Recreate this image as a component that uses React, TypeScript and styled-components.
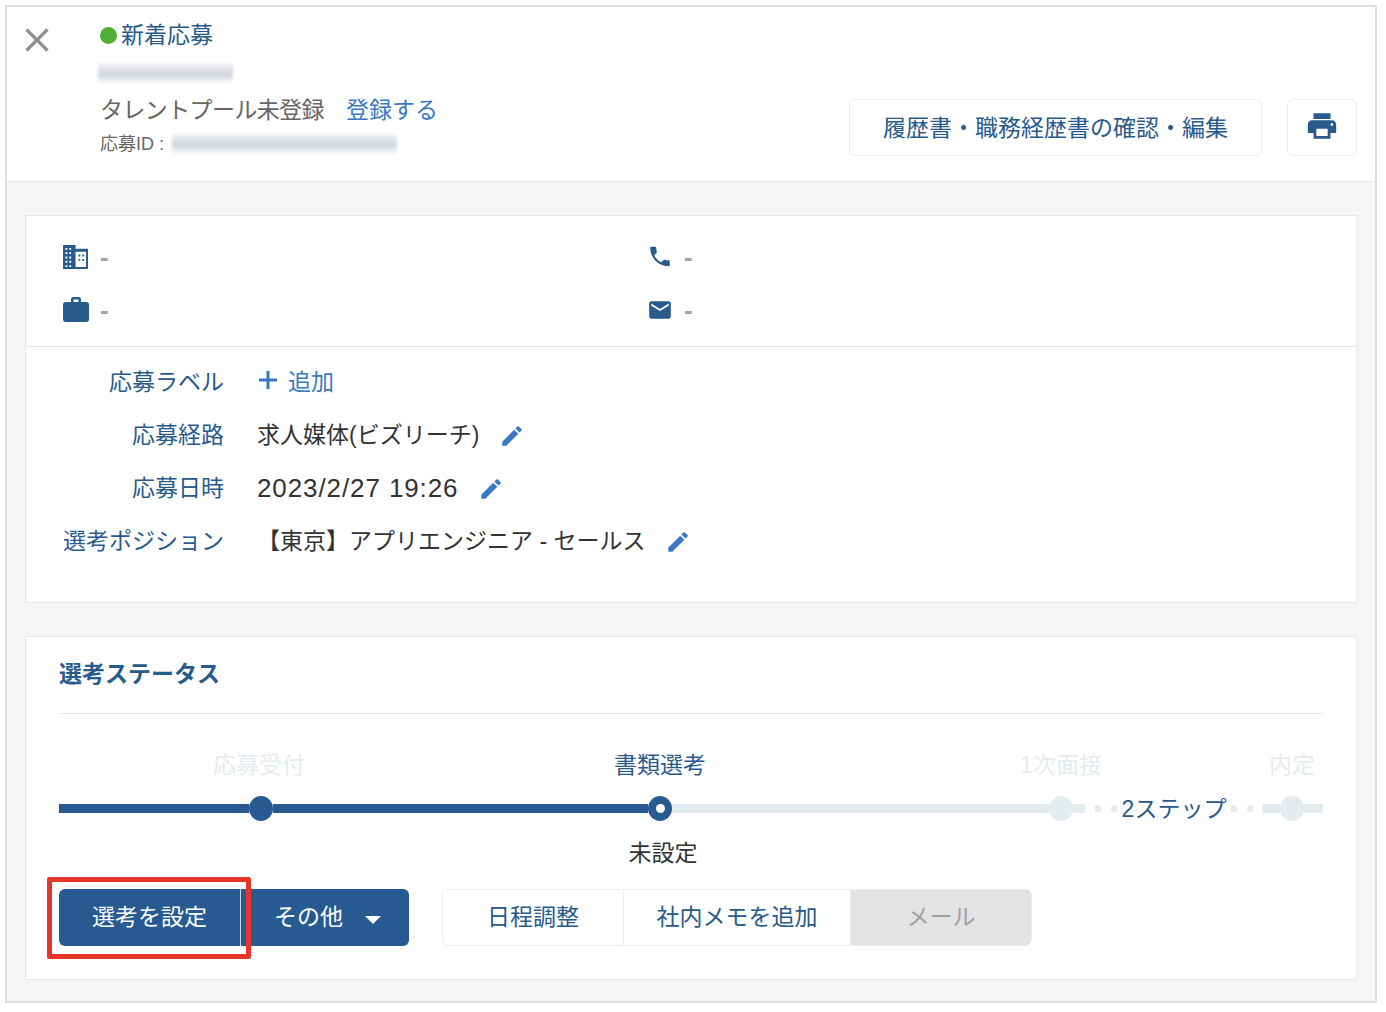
import React from 'react';
import styled, { createGlobalStyle } from 'styled-components';
import { MdClose, MdEdit, MdEmail, MdLocalPrintshop, MdPhone } from 'react-icons/md';

const NAVY = '#285a8c';
const BLUE = '#3a78c4';
const FADED = '#e5ecef';

const GlobalStyle = createGlobalStyle`
  html, body {
    margin: 0;
    padding: 0;
    background: #fff;
  }
  body {
    font-family: "Liberation Sans", "Noto Sans CJK JP", sans-serif;
    font-size: 23px;
    color: #333;
  }
  * { box-sizing: border-box; }
`;

const BuildingIcon = () => (
  <svg width="26" height="24" viewBox="0 0 27 25" fill={NAVY}>
    <path d="M0 0h13v4h13v21H0zM2.500 3v2h2V3zm4 0v2h2V3zM2.500 7.500v2h2v-2zm4 0v2h2v-2zM2.500 12v2h2v-2zm4 0v2h2v-2zM2.500 16.500v2h2v-2zm4 0v2h2v-2zM2.500 21v2h2v-2zm4 0v2h2v-2zM13 7v16h11V7zm3 3h2v2h-2zm4 0h2v2h-2zm-4 4.500h2v2h-2zm4 0h2v2h-2z" fillRule="evenodd" />
  </svg>
);

const CaseIcon = () => (
  <svg width="26" height="25" viewBox="0 0 26 25" fill={NAVY}>
    <path d="M8 5V2.500A2.500 2.500 0 0 1 10.500 0h5A2.500 2.500 0 0 1 18 2.500V5h5a3 3 0 0 1 3 3v14a3 3 0 0 1-3 3H3a3 3 0 0 1-3-3V8a3 3 0 0 1 3-3zm2.500 0h5V2.500h-5z" fillRule="evenodd" />
  </svg>
);

const Frame = styled.div`
  margin: 5px;
  width: 1372px;
  height: 998px;
  border: 2px solid #dedede;
  background: #f5f5f5;
  display: flex;
  flex-direction: column;
`;

const Header = styled.header`
  height: 175px;
  flex: none;
  background: #fff;
  border-bottom: 1px solid #e6e6e6;
  display: flex;
  align-items: flex-start;
  padding: 9px 18px 0 10px;
`;

const CloseButton = styled.div`
  width: 83px;
  padding-top: 4px;
  color: #8f8f8f;
  display: flex;
  flex: none;
`;

const Info = styled.div`
  display: flex;
  flex-direction: column;
`;

const StatusRow = styled.div`
  display: flex;
  align-items: center;
  gap: 4px;
  height: 34px;
  color: ${NAVY};
`;

const GreenDot = styled.span`
  width: 17px;
  height: 17px;
  margin-top: 4px;
  border-radius: 50%;
  background: #4fae33;
`;

const Blurred = styled.div<{ $w: number }>`
  width: ${p => p.$w}px;
  height: 19px;
  background: linear-gradient(#f3f4f5, #d9dce2 40%, #d3d7dd 60%, #f3f4f5);
  filter: blur(1.5px);
`;

const NameBlur = styled(Blurred)`
  margin: 13px 0 9px -2px;
`;

const IdBlur = styled(Blurred)`
  margin-top: 2px;
`;

const TalentRow = styled.div`
  display: flex;
  align-items: center;
  gap: 22px;
  height: 34px;
  color: #666;
`;

const TalentText = styled.span`
  letter-spacing: -0.6px;
`;

const TextLink = styled.a`
  color: ${BLUE};
`;

const IdRow = styled.div`
  display: flex;
  align-items: center;
  height: 24px;
  margin-top: 5px;
  font-size: 18px;
  color: #666;
  gap: 8px;
`;

const HeaderActions = styled.div`
  margin-left: auto;
  margin-top: 83px;
  display: flex;
  gap: 25px;
`;

const OutlineButton = styled.button<{ $w: number }>`
  width: ${p => p.$w}px;
  height: 57px;
  background: #fff;
  border: 1px solid #e9edf0;
  border-radius: 6px;
  color: ${NAVY};
  font: inherit;
  padding: 0 0 3px;
  display: flex;
  align-items: center;
  justify-content: center;
`;

const Body = styled.main`
  flex: 1;
  padding: 33px 18px 22px;
  display: flex;
  flex-direction: column;
  gap: 33px;
`;

const Card = styled.section<{ $h: number }>`
  height: ${p => p.$h}px;
  background: #fff;
  border: 1px solid #e8e8e8;
`;

const ContactGrid = styled.div`
  display: grid;
  grid-template-columns: 584px 1fr;
  grid-auto-rows: 53px;
  padding: 14px 0 10px 37px;
  border-bottom: 1px solid #e4e4e4;
`;

const ContactItem = styled.div`
  display: flex;
  align-items: center;
  gap: 11px;
  color: #a3a3a3;
`;

const IconBox = styled.span`
  width: 26px;
  display: flex;
  justify-content: center;
  color: ${NAVY};
`;

const Dash = styled.span`
  font-size: 26px;
  line-height: 26px;
  font-weight: 700;
`;

const Fields = styled.div`
  padding-top: 7px;
`;

const FieldRow = styled.div`
  display: flex;
  align-items: center;
  height: 53px;
`;

const FieldLabel = styled.div`
  width: 198px;
  margin-right: 33px;
  padding-bottom: 2px;
  text-align: right;
  color: ${NAVY};
`;

const FieldValue = styled.div<{ $numeric?: boolean }>`
  color: #333;
  padding-bottom: 2px;
  ${p => p.$numeric && `
    padding: 4px 0 0;
    font-size: 26px;
    letter-spacing: 0.9px;
  `}
`;

const AddLink = styled.a`
  display: flex;
  align-items: center;
  gap: 9px;
  padding-bottom: 2px;
  color: ${BLUE};
`;

const EditIcon = styled(MdEdit)`
  margin: 4px 0 0 20px;
  color: ${BLUE};
`;

const StatusTitle = styled.h2`
  margin: 0 33px;
  height: 77px;
  padding-bottom: 6px;
  display: flex;
  align-items: center;
  font-size: 23px;
  font-weight: 700;
  color: ${NAVY};
  border-bottom: 1px solid #e4e4e4;
`;

const Progress = styled.div`
  padding: 0 33px;
`;

const StepLabels = styled.div`
  display: grid;
  grid-template-columns: 400px 402px 400px 1fr;
  height: 34px;
  margin-top: 34px;
`;

const StepLabel = styled.div<{ $active?: boolean }>`
  text-align: center;
  line-height: 34px;
  white-space: nowrap;
  color: ${p => (p.$active ? NAVY : FADED)};
`;

const Track = styled.div`
  display: flex;
  align-items: center;
  height: 26px;
  margin-top: 13px;
`;

const Seg = styled.span<{ $w: number; $done?: boolean }>`
  width: ${p => p.$w}px;
  height: 9px;
  flex: none;
  background: ${p => (p.$done ? '#265a90' : FADED)};
`;

const Node = styled.span<{ $done?: boolean; $current?: boolean }>`
  width: 24px;
  height: 25px;
  flex: none;
  border-radius: 50%;
  background: ${p => (p.$done ? '#265a90' : FADED)};
  display: flex;
  align-items: center;
  justify-content: center;
  &::after {
    content: '';
    display: ${p => (p.$current ? 'block' : 'none')};
    width: 9px;
    height: 9px;
    border-radius: 50%;
    background: #fff;
  }
`;

const Dots = styled.span<{ $left: number; $right: number }>`
  display: flex;
  flex: none;
  gap: 10px;
  padding: 0 ${p => p.$right}px 0 ${p => p.$left}px;
`;

const Dot = styled.span`
  width: 7px;
  height: 7px;
  border-radius: 50%;
  background: ${FADED};
`;

const SkipText = styled.span`
  color: ${NAVY};
  white-space: nowrap;
  flex: none;
  width: 106px;
  padding-bottom: 3px;
  text-align: center;
`;

const CurrentState = styled.div`
  margin-top: 15px;
  height: 34px;
  line-height: 34px;
  width: 1208px;
  text-align: center;
  color: #333;
`;

const ActionBar = styled.div`
  display: flex;
  margin-top: 19px;
`;

const SplitButton = styled.div`
  position: relative;
  display: flex;
  width: 350px;
  height: 57px;
  background: #265a90;
  border-radius: 6px;
  color: #fff;
`;

const SplitMain = styled.div`
  width: 182px;
  padding-bottom: 5px;
  display: flex;
  align-items: center;
  justify-content: center;
  border-right: 1px solid #cfdbe6;
`;

const SplitMore = styled.div`
  flex: 1;
  display: flex;
  align-items: center;
  padding: 0 0 5px 33px;
  gap: 22px;
`;

const Caret = styled.span`
  width: 0;
  height: 0;
  margin-top: 10px;
  border-left: 8.500px solid transparent;
  border-right: 8.500px solid transparent;
  border-top: 8px solid #fff;
`;

const Highlight = styled.div`
  position: absolute;
  left: -12px;
  top: -12px;
  width: 204px;
  height: 82px;
  border: 5px solid #e8352a;
  border-radius: 2px;
  pointer-events: none;
`;

const ButtonGroup = styled.div`
  display: flex;
  margin-left: 33px;
  height: 57px;
  border: 1px solid #e9edf0;
  border-radius: 6px;
  overflow: hidden;
`;

const GroupItem = styled.div<{ $w: number; $disabled?: boolean }>`
  width: ${p => p.$w}px;
  padding-bottom: 6px;
  display: flex;
  align-items: center;
  justify-content: center;
  color: ${p => (p.$disabled ? '#a0a0a0' : NAVY)};
  background: ${p => (p.$disabled ? '#e3e3e3' : '#fff')};
  & + & {
    border-left: 1px solid #e9edf0;
  }
`;

const fields = [
  { label: '応募経路', value: '求人媒体(ビズリーチ)' },
  { label: '応募日時', value: '2023/2/27 19:26', numeric: true },
  { label: '選考ポジション', value: '【東京】アプリエンジニア - セールス' },
];

export default function App() {
  return (
    <>
      <GlobalStyle />
      <Frame>
        <Header>
          <CloseButton>
            <MdClose size={40} />
          </CloseButton>
          <Info>
            <StatusRow>
              <GreenDot />
              新着応募
            </StatusRow>
            <NameBlur $w={135} />
            <TalentRow>
              <TalentText>タレントプール未登録</TalentText>
              <TextLink>登録する</TextLink>
            </TalentRow>
            <IdRow>
              応募ID :
              <IdBlur $w={225} />
            </IdRow>
          </Info>
          <HeaderActions>
            <OutlineButton $w={413}>履歴書・職務経歴書の確認・編集</OutlineButton>
            <OutlineButton $w={70}>
              <MdLocalPrintshop size={34} />
            </OutlineButton>
          </HeaderActions>
        </Header>
        <Body>
          <Card $h={388}>
            <ContactGrid>
              <ContactItem>
                <IconBox><BuildingIcon /></IconBox>
                <Dash>-</Dash>
              </ContactItem>
              <ContactItem>
                <IconBox><MdPhone size={33} /></IconBox>
                <Dash>-</Dash>
              </ContactItem>
              <ContactItem>
                <IconBox><CaseIcon /></IconBox>
                <Dash>-</Dash>
              </ContactItem>
              <ContactItem>
                <IconBox><MdEmail size={32} /></IconBox>
                <Dash>-</Dash>
              </ContactItem>
            </ContactGrid>
            <Fields>
              <FieldRow>
                <FieldLabel>応募ラベル</FieldLabel>
                <AddLink>
                  <svg width="22" height="22" viewBox="0 0 22 22" fill={BLUE}>
                    <path d="M9.500 2h3v7.500H20v3h-7.500V20h-3v-7.500H2v-3h7.500z" />
                  </svg>
                  追加
                </AddLink>
              </FieldRow>
              {fields.map(f => (
                <FieldRow key={f.label}>
                  <FieldLabel>{f.label}</FieldLabel>
                  <FieldValue $numeric={f.numeric}>{f.value}</FieldValue>
                  <EditIcon size={26} />
                </FieldRow>
              ))}
            </Fields>
          </Card>
          <Card $h={344}>
            <StatusTitle>選考ステータス</StatusTitle>
            <Progress>
              <StepLabels>
                <StepLabel>応募受付</StepLabel>
                <StepLabel $active>書類選考</StepLabel>
                <StepLabel>1次面接</StepLabel>
                <StepLabel>内定</StepLabel>
              </StepLabels>
              <Track>
                <Seg $w={190} $done />
                <Node $done />
                <Seg $w={375} $done />
                <Node $done $current />
                <Seg $w={377} />
                <Node />
                <Seg $w={12} />
                <Dots $left={8.5} $right={3.5}><Dot /><Dot /></Dots>
                <SkipText>2ステップ</SkipText>
                <Dots $left={2.5} $right={8.5}><Dot /><Dot /></Dots>
                <Seg $w={18} />
                <Node />
                <Seg $w={19} />
              </Track>
              <CurrentState>未設定</CurrentState>
              <ActionBar>
                <SplitButton>
                  <SplitMain>選考を設定</SplitMain>
                  <SplitMore>
                    その他
                    <Caret />
                  </SplitMore>
                  <Highlight />
                </SplitButton>
                <ButtonGroup>
                  <GroupItem $w={180}>日程調整</GroupItem>
                  <GroupItem $w={227}>社内メモを追加</GroupItem>
                  <GroupItem $w={181} $disabled>メール</GroupItem>
                </ButtonGroup>
              </ActionBar>
            </Progress>
          </Card>
        </Body>
      </Frame>
    </>
  );
}
